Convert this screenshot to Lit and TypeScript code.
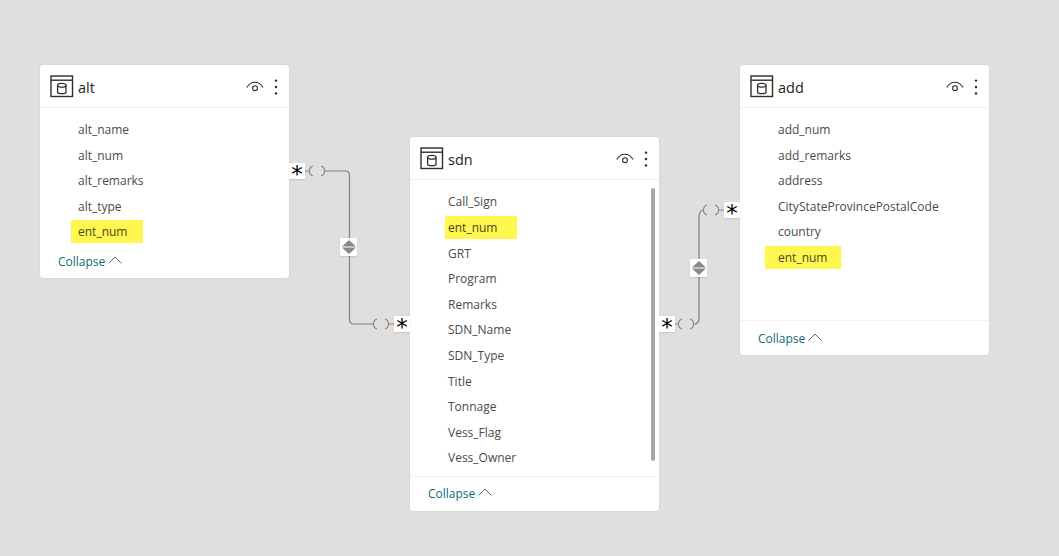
import { LitElement, html, css, svg } from "lit";
import { customElement } from "lit/decorators.js";

interface Field { name: string; hlWidth?: number; hlPad?: number }
interface Table {
  name: string; x: number; y: number; w: number; h: number; pad: number;
  fields: Field[]; footLine: boolean; scroll?: boolean;
}

const tables: Table[] = [
  { name: "alt", x: 40, y: 65, w: 249, h: 213, pad: 8.7, footLine: false,
    fields: [{ name: "alt_name" }, { name: "alt_num" }, { name: "alt_remarks" }, { name: "alt_type" }, { name: "ent_num", hlWidth: 72, hlPad: 7 }] },
  { name: "sdn", x: 410, y: 137, w: 249, h: 373.6, pad: 9.2, footLine: true, scroll: true,
    fields: [{ name: "Call_Sign" }, { name: "ent_num", hlWidth: 72, hlPad: 3 }, { name: "GRT" }, { name: "Program" }, { name: "Remarks" }, { name: "SDN_Name" }, { name: "SDN_Type" }, { name: "Title" }, { name: "Tonnage" }, { name: "Vess_Flag" }, { name: "Vess_Owner" }] },
  { name: "add", x: 740, y: 65, w: 249, h: 290, pad: 8.7, footLine: true,
    fields: [{ name: "add_num" }, { name: "add_remarks" }, { name: "address" }, { name: "CityStateProvincePostalCode" }, { name: "country" }, { name: "ent_num", hlWidth: 76, hlPad: 13 }] },
];

const stars = [
  { x: 289, y: 163 }, { x: 394, y: 316 }, { x: 659, y: 316 }, { x: 724, y: 202 },
];
const toggles = [{ x: 340, y: 238 }, { x: 690, y: 259 }];

const tableIcon = html`<svg class="ticon" width="24" height="23" viewBox="0 0 24 23" fill="none" stroke="#2f2d2b">
  <rect x="1" y="1" width="21.5" height="20.5" stroke-width="1.4"/>
  <path d="M1 5.2H22.5" stroke-width="1.4"/>
  <path d="M7.6 10.2V17.2Q7.6 18.6 11.8 18.6T16 17.2V10.2" stroke-width="1.3"/>
  <ellipse cx="11.8" cy="10.2" rx="4.2" ry="1.9" stroke-width="1.3"/>
</svg>`;

const eyeIcon = html`<svg width="18" height="12" viewBox="0 0 18 12" fill="none" stroke="#2b2a29" stroke-width="1.1">
  <path d="M0.8 6.6C3 2.6 6 1.3 8.9 1.3S14.8 2.6 17 6.6"/>
  <circle cx="9" cy="7.2" r="2.4"/>
</svg>`;

const moreIcon = html`<svg width="4" height="16" viewBox="0 0 4 16" fill="#2b2a29">
  <circle cx="2" cy="1.6" r="1.2"/><circle cx="2" cy="8" r="1.2"/><circle cx="2" cy="14.4" r="1.2"/>
</svg>`;

const chevron = html`<svg class="chev" width="14" height="8" viewBox="0 0 14 8" fill="none" stroke="#5a6b70" stroke-width="1">
  <path d="M0.6 7.4L7 1L13.4 7.4"/>
</svg>`;

const toggleIcon = html`<svg width="14" height="14" viewBox="0 0 14 14" fill="#8a8886">
  <path d="M7 0L14 6.5H0Z"/><path d="M0 7.5H14L7 14Z"/>
</svg>`;

const crowd = (x: number, y: number) => svg`
  <path d="M${x + 4} ${y - 5}A5.3 5.3 0 0 0 ${x + 4} ${y + 5}" />
  <path d="M${x + 12} ${y - 5}A5.3 5.3 0 0 1 ${x + 12} ${y + 5}" />`;

@customElement("app-root")
export class AppRoot extends LitElement {
  static styles = css`
    :host {
      display: block; position: relative; width: 1059px; height: 556px; overflow: hidden;
      background: #e1dfdd; font-family: "Open Sans", "Noto Sans", sans-serif;
    }
    .lines { position: absolute; left: 0; top: 0; pointer-events: none; }
    .lines .link { stroke: #81807e; stroke-width: 1.2; fill: none; }
    .lines .thin { stroke: #8a8886; stroke-width: 1.1; fill: none; }
    .card {
      position: absolute; background: #fff; border-radius: 3px; display: flex; flex-direction: column;
      box-shadow: 0 0 2px rgba(0,0,0,.10); box-sizing: border-box;
    }
    .head {
      height: 43px; box-sizing: border-box; flex: none; display: flex; align-items: center;
      padding: 2px 11px 0 10px; border-bottom: 1px solid #f0efee;
    }
    .ticon { flex: none; margin-top: -2px; }
    .title { margin-left: 4px; font-size: 14.5px; font-weight: 500; color: #252423; flex: 1; margin-top: 1px; }
    .eye { display: flex; margin-right: 10px; }
    .more { display: flex; margin-top: -1px; }
    .body { flex: 1; padding-left: 38px; position: relative; min-height: 0; }
    .row {
      height: 25.6px; display: flex; align-items: center; font-size: 12px; color: #4c4a48;
      white-space: nowrap;
    }
    .hl {
      color: #4a4720; height: 23px; display: flex; align-items: center;
      box-sizing: border-box; background: #fff650;
    }
    .foot {
      flex: none; height: 34px; display: flex; align-items: center; gap: 3px;
      padding-left: 18px; font-size: 12px; color: #0f6a78;
    }
    .foot.line { border-top: 1px solid #f3f2f1; }
    .foot.bare { height: 33px; }
    .chev { margin-top: -3px; }
    .scroll {
      position: absolute; right: 4px; top: 8px; width: 4px; height: 273px; background: #a9a8a7; border-radius: 2px;
    }
    .star {
      position: absolute; width: 16px; height: 16px; background: #fff;
      display: flex; justify-content: center; align-items: flex-start; border-radius: 1px;
      font-family: "DejaVu Sans", sans-serif; font-size: 23px; line-height: 22px; color: #000; z-index: 2;
      box-shadow: 0 1px 2px rgba(0,0,0,.12);
    }
    .toggle {
      position: absolute; width: 17px; height: 18px; background: #fff; display: flex;
      align-items: center; justify-content: center; border-radius: 1px; z-index: 2;
      box-shadow: 0 1px 2px rgba(0,0,0,.12);
    }
  `;

  render() {
    return html`
      <svg class="lines" width="1059" height="556">
        <path class="link" d="M325 171H345Q349.5 171 349.5 175.5V319.5Q349.5 324 354 324H373"/>
        <path class="link" d="M694 324Q699 324 699 318V217Q699 211 703 210"/>
        <path class="thin" d="M305 171H309M389 324H395M674 324H678M719 210H724"/>
        <g class="thin">${crowd(309, 171)}${crowd(373, 324)}${crowd(678, 324)}${crowd(703, 210)}</g>
      </svg>
      ${tables.map((t) => html`
        <section class="card" style="left:${t.x}px;top:${t.y}px;width:${t.w}px;height:${t.h}px">
          <header class="head">
            ${tableIcon}
            <div class="title">${t.name}</div>
            <div class="eye">${eyeIcon}</div>
            <div class="more">${moreIcon}</div>
          </header>
          <div class="body" style="padding-top:${t.pad}px">
            ${t.fields.map((f) => html`<div class="row">${f.hlWidth
              ? html`<div class="hl" style="width:${f.hlWidth}px;padding-left:${f.hlPad}px;margin-left:-${f.hlPad}px">${f.name}</div>`
              : html`<span>${f.name}</span>`}</div>`)}
            ${t.scroll ? html`<div class="scroll"></div>` : ""}
          </div>
          <footer class="foot ${t.footLine ? "line" : "bare"}">Collapse ${chevron}</footer>
        </section>`)}
      ${stars.map((s) => html`<div class="star" style="left:${s.x}px;top:${s.y}px">*</div>`)}
      ${toggles.map((s) => html`<div class="toggle" style="left:${s.x}px;top:${s.y}px">${toggleIcon}</div>`)}
    `;
  }
}
